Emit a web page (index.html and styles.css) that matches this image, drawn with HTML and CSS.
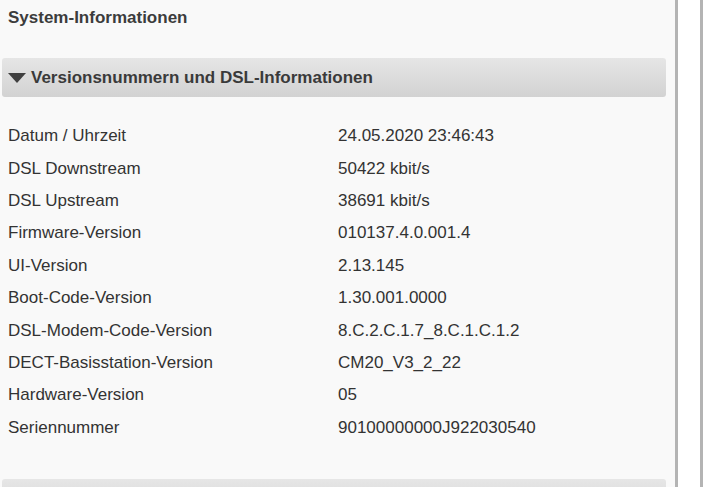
FILE: index.html
```html
<!DOCTYPE html>
<html lang="de">
<head>
<meta charset="utf-8">
<title>System-Informationen</title>
<link rel="stylesheet" href="styles.css">
</head>
<body>
<div class="layout">
  <main class="main">
    <h1 class="page-title">System-Informationen</h1>
    <section class="block">
      <div class="block-head">
        <svg class="caret" width="18" height="10" viewBox="0 0 18 10"><polygon points="0,0 18,0 9,10" fill="#404040"/></svg>
        <span>Versionsnummern und DSL-Informationen</span>
      </div>
      <div class="rows">
        <div class="row"><span class="label">Datum / Uhrzeit</span><span class="value">24.05.2020 23:46:43</span></div>
        <div class="row"><span class="label">DSL Downstream</span><span class="value">50422 kbit/s</span></div>
        <div class="row"><span class="label">DSL Upstream</span><span class="value">38691 kbit/s</span></div>
        <div class="row"><span class="label">Firmware-Version</span><span class="value">010137.4.0.001.4</span></div>
        <div class="row"><span class="label">UI-Version</span><span class="value">2.13.145</span></div>
        <div class="row"><span class="label">Boot-Code-Version</span><span class="value">1.30.001.0000</span></div>
        <div class="row"><span class="label">DSL-Modem-Code-Version</span><span class="value">8.C.2.C.1.7_8.C.1.C.1.2</span></div>
        <div class="row"><span class="label">DECT-Basisstation-Version</span><span class="value">CM20_V3_2_22</span></div>
        <div class="row"><span class="label">Hardware-Version</span><span class="value">05</span></div>
        <div class="row"><span class="label">Seriennummer</span><span class="value">90100000000J922030540</span></div>
      </div>
    </section>
    <div class="block-head next"></div>
  </main>
  <div class="gutter"></div>
  <div class="scrollbar"></div>
  <div class="rest"></div>
</div>
</body>
</html>
```
FILE: styles.css
```css
html, body {
  margin: 0;
  padding: 0;
  height: 100%;
  background: #ffffff;
  overflow: hidden;
}
.layout {
  display: flex;
  height: 100%;
  font-family: "Liberation Sans", Arial, sans-serif;
}
.main {
  width: 675px;
  flex: none;
  background: #f9f9f9;
  border-right: 3px solid #b4b4b4;
  padding-top: 8px;
  box-sizing: content-box;
  overflow: hidden;
}
.page-title {
  margin: 0 0 0 8px;
  font-size: 17px;
  line-height: 20px;
  font-weight: bold;
  color: #3c3c3c;
}
.block {
  margin-top: 30px;
}
.block-head {
  margin-left: 2px;
  width: 664px;
  height: 39px;
  border-radius: 3px;
  background: linear-gradient(#e6e6e6, #d2d2d2);
  display: flex;
  align-items: center;
  gap: 5px;
  padding-left: 6px;
  box-sizing: border-box;
  font-size: 17px;
  font-weight: bold;
  color: #3a3a3a;
}
.caret {
  flex: none;
}
.rows {
  padding-top: 23px;
}
.row {
  display: flex;
  height: 32.4px;
  align-items: center;
  font-size: 17px;
  color: #333333;
}
.label {
  width: 330px;
  padding-left: 8px;
  flex: none;
}
.next {
  margin-top: 35px;
}
.gutter {
  width: 22px;
  flex: none;
}
.scrollbar {
  width: 3px;
  flex: none;
  background: #b4b4b4;
}
.rest {
  flex: 1;
}
```
